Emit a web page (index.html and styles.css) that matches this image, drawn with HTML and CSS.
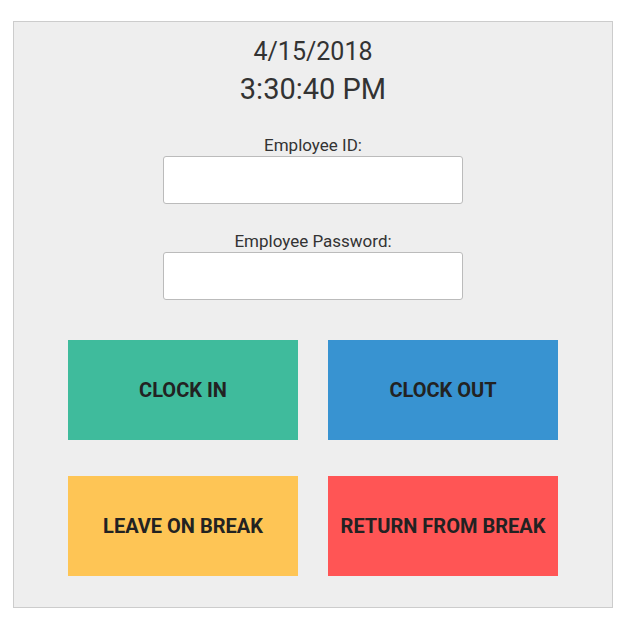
FILE: index.html
```html
<!DOCTYPE html>
<html lang="en">
<head>
    <meta charset="UTF-8">
    <meta name="viewport" content="width=device-width, initial-scale=1.0">
    <title>Time Clock</title>
    <link rel="stylesheet" href="styles.css">
</head>
<body>
    <div class="clock-panel">
        <div class="date">4/15/2018</div>
        <div class="time">3:30:40 PM</div>
        <div class="field">
            <label for="emp_id">Employee ID:</label>
            <input type="text" id="emp_id">
        </div>
        <div class="field">
            <label for="emp_pass">Employee Password:</label>
            <input type="password" id="emp_pass">
        </div>
        <div class="button-grid">
            <button class="btn btn-in">CLOCK IN</button>
            <button class="btn btn-out">CLOCK OUT</button>
            <button class="btn btn-leave">LEAVE ON BREAK</button>
            <button class="btn btn-return">RETURN FROM BREAK</button>
        </div>
    </div>
</body>
</html>
```

FILE: styles.css
```css
body {
    font-family: Roboto, "Liberation Sans", sans-serif;
    margin: 0;
    padding: 21px 0 0 13px;
    background-color: #fff;
    color: #333;
}
.clock-panel {
    width: 600px;
    box-sizing: border-box;
    background: #eee;
    border: 1px solid #ccc;
    padding: 15px 0 31px;
    display: flex;
    flex-direction: column;
    align-items: center;
}
.date {
    font-size: 25px;
    line-height: 30px;
    margin-bottom: 4px;
}
.time {
    font-size: 29px;
    line-height: 36px;
    margin-bottom: 28px;
}
.field {
    display: flex;
    flex-direction: column;
    align-items: center;
    margin-bottom: 27px;
}
.field label {
    font-size: 17px;
    line-height: 20px;
    margin-bottom: 1px;
}
.field input {
    width: 300px;
    height: 48px;
    box-sizing: border-box;
    border: 1px solid #bbb;
    border-radius: 3px;
    background: #fff;
    padding: 0 10px;
    font-size: 16px;
}
.button-grid {
    display: grid;
    grid-template-columns: 230px 230px;
    column-gap: 30px;
    row-gap: 36px;
    margin-top: 13px;
}
.btn {
    height: 100px;
    border: none;
    font-family: Roboto, "Liberation Sans", sans-serif;
    font-size: 20px;
    font-weight: bold;
    color: #222;
    cursor: pointer;
    padding: 0;
}
.btn-in {
    background-color: #3fbb9c;
}
.btn-out {
    background-color: #3893d1;
}
.btn-leave {
    background-color: #fec555;
}
.btn-return {
    background-color: #ff5555;
}
```
